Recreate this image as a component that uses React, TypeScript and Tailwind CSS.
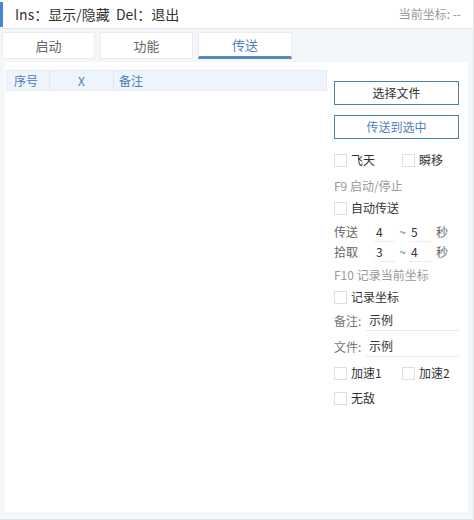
import React from 'react';

const font = { fontFamily: '"Noto Sans CJK SC", "Noto Sans", sans-serif' };

function Check({ label, className = '' }: { label: string; className?: string }) {
  return (
    <label className={`flex items-center gap-[4px] ${className}`}>
      <span className="w-[13px] h-[13px] border border-[#dcdfe4] bg-white"></span>
      <span className="text-[12px] text-[#333]">{label}</span>
    </label>
  );
}

function Range({ label, a, b }: { label: string; a: string; b: string }) {
  return (
    <div className="flex items-center h-[20px] text-[12px] text-[#666]">
      <span className="w-[40px]">{label}</span>
      <span className="w-[22px] h-[20px] border-b border-[#eceef1] text-[#333] pl-[2px] leading-[20px]">{a}</span>
      <span className="w-[13px] text-center text-[#666]">~</span>
      <span className="w-[23px] h-[20px] border-b border-[#eceef1] text-[#333] pl-[2px] leading-[20px]">{b}</span>
      <span className="ml-[4px]">秒</span>
    </div>
  );
}

function Field({ label, value, className = '' }: { label: string; value: string; className?: string }) {
  return (
    <div className={`flex items-center h-[20px] text-[12px] ${className}`}>
      <span className="w-[32px] text-[#777]">{label}</span>
      <span className="w-[93px] h-[20px] border-b border-[#e6e9ed] text-[#333] pl-[3px] leading-[18px]">{value}</span>
    </div>
  );
}

export default function App() {
  const tabs = ['启动', '功能', '传送'];

  return (
    <div style={font} className="w-[474px] h-[520px] bg-[#f4f7fa] flex flex-col border-r border-b border-[#e1e5e9]">
      <header className="h-[29px] bg-white border-b border-[#e6eaee] flex items-center pr-[12px]">
        <div className="w-[3px] h-[25px] bg-[#4a84d4]"></div>
        <span className="ml-[12px] text-[14px] text-[#333]">Ins：显示/隐藏&nbsp;&nbsp;Del：退出</span>
        <span className="ml-auto text-[12px] text-[#999]">当前坐标: --</span>
      </header>

      <nav className="flex gap-[5px] px-[2px] pt-[3px]">
        {tabs.map((t, i) => (
          <div
            key={t}
            className={
              i === 2
                ? 'w-[94px] h-[27px] bg-white border border-[#e9edf1] border-b-[3px] border-b-[#5a87bb] flex items-center justify-center text-[13px] text-[#4f7fbd]'
                : 'w-[93px] h-[27px] bg-white border border-[#e9edf1] flex items-center justify-center text-[13px] text-[#666]'
            }
          >
            {t}
          </div>
        ))}
      </nav>

      <main className="flex-1 mx-[5px] mt-[3px] mb-[7px] bg-white flex">
        <div className="w-[322px] pt-[8px] pl-[1px]">
          <div className="h-[21px] bg-[#eef4fb] border border-[#e3ebf4] flex text-[12px] text-[#4c7bb8]">
            <div className="w-[43px] flex items-center pl-[7px] border-r border-[#dde7f2]">序号</div>
            <div className="w-[64px] flex items-center justify-center border-r border-[#dde7f2]">X</div>
            <div className="flex-1 flex items-center pl-[5px]">备注</div>
          </div>
        </div>

        <aside className="ml-[7px] pt-[19px] w-[125px] flex flex-col">
          <button className="h-[24px] border border-[#4e80a8] bg-white text-[12px] text-[#333]">选择文件</button>
          <button className="h-[24px] mt-[10px] border border-[#4e80a8] bg-white text-[12px] text-[#4f7fbd]">传送到选中</button>

          <div className="flex h-[20px] mt-[11px]">
            <Check label="飞天" className="w-[68px]" />
            <Check label="瞬移" />
          </div>
          <div className="h-[20px] mt-[6px] flex items-center text-[12px] text-[#999]">F9 启动/停止</div>
          <div className="flex h-[20px] mt-[2px]">
            <Check label="自动传送" />
          </div>
          <div className="mt-[4px]">
            <Range label="传送" a="4" b="5" />
          </div>
          <Range label="拾取" a="3" b="4" />
          <div className="h-[20px] mt-[3px] flex items-center text-[12px] text-[#999]">F10 记录当前坐标</div>
          <div className="flex h-[20px] mt-[2px]">
            <Check label="记录坐标" />
          </div>
          <Field label="备注:" value="示例" className="mt-[4px]" />
          <Field label="文件:" value="示例" className="mt-[6px]" />
          <div className="flex h-[20px] mt-[6px]">
            <Check label="加速1" className="w-[68px]" />
            <Check label="加速2" />
          </div>
          <div className="flex h-[20px] mt-[5px]">
            <Check label="无敌" />
          </div>
        </aside>
      </main>
    </div>
  );
}
